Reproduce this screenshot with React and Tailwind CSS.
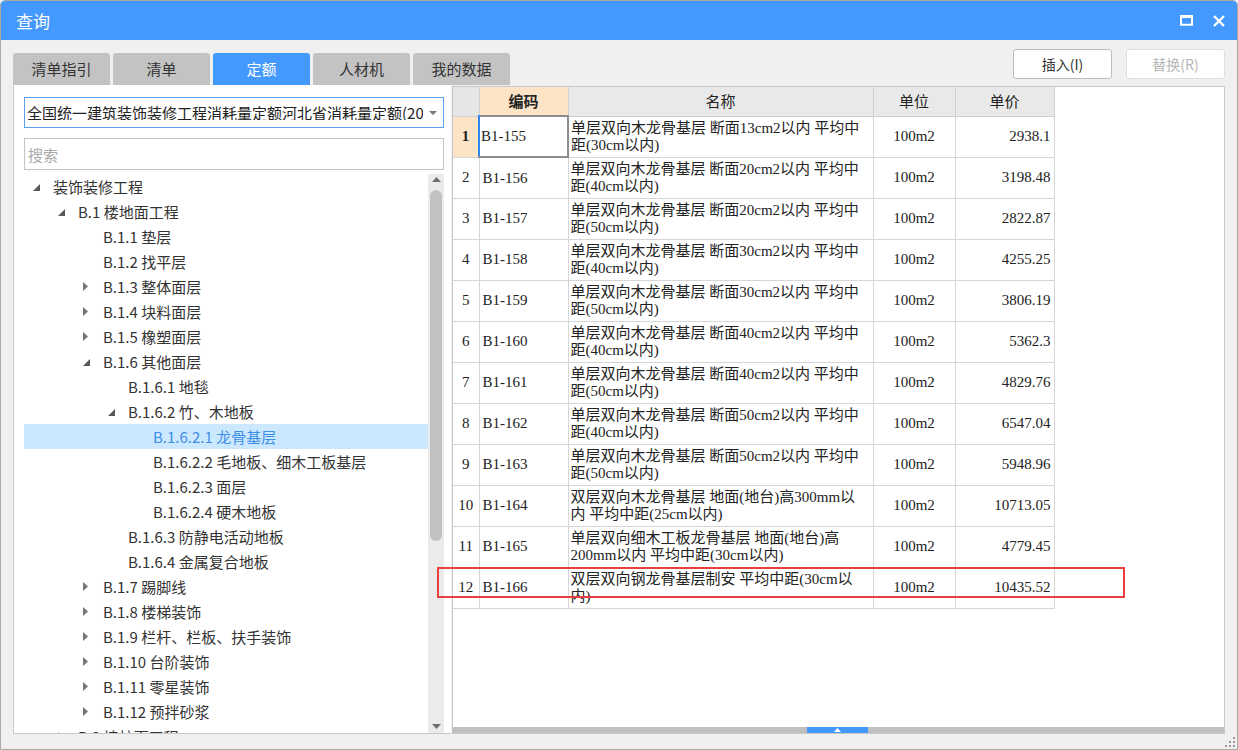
import React from "react";

const tree = [
  [0, "exp", "装饰装修工程"],
  [1, "exp", "B.1 楼地面工程"],
  [2, null, "B.1.1 垫层"],
  [2, null, "B.1.2 找平层"],
  [2, "col", "B.1.3 整体面层"],
  [2, "col", "B.1.4 块料面层"],
  [2, "col", "B.1.5 橡塑面层"],
  [2, "exp", "B.1.6 其他面层"],
  [3, null, "B.1.6.1 地毯"],
  [3, "exp", "B.1.6.2 竹、木地板"],
  [4, null, "B.1.6.2.1 龙骨基层", true],
  [4, null, "B.1.6.2.2 毛地板、细木工板基层"],
  [4, null, "B.1.6.2.3 面层"],
  [4, null, "B.1.6.2.4 硬木地板"],
  [3, null, "B.1.6.3 防静电活动地板"],
  [3, null, "B.1.6.4 金属复合地板"],
  [2, "col", "B.1.7 踢脚线"],
  [2, "col", "B.1.8 楼梯装饰"],
  [2, "col", "B.1.9 栏杆、栏板、扶手装饰"],
  [2, "col", "B.1.10 台阶装饰"],
  [2, "col", "B.1.11 零星装饰"],
  [2, "col", "B.1.12 预拌砂浆"],
  [1, "col", "B.2 墙柱面工程"],
];

const rows = [
  ["B1-155", "单层双向木龙骨基层 断面13cm2以内 平均中", "距(30cm以内)", "2938.1"],
  ["B1-156", "单层双向木龙骨基层 断面20cm2以内 平均中", "距(40cm以内)", "3198.48"],
  ["B1-157", "单层双向木龙骨基层 断面20cm2以内 平均中", "距(50cm以内)", "2822.87"],
  ["B1-158", "单层双向木龙骨基层 断面30cm2以内 平均中", "距(40cm以内)", "4255.25"],
  ["B1-159", "单层双向木龙骨基层 断面30cm2以内 平均中", "距(50cm以内)", "3806.19"],
  ["B1-160", "单层双向木龙骨基层 断面40cm2以内 平均中", "距(40cm以内)", "5362.3"],
  ["B1-161", "单层双向木龙骨基层 断面40cm2以内 平均中", "距(50cm以内)", "4829.76"],
  ["B1-162", "单层双向木龙骨基层 断面50cm2以内 平均中", "距(40cm以内)", "6547.04"],
  ["B1-163", "单层双向木龙骨基层 断面50cm2以内 平均中", "距(50cm以内)", "5948.96"],
  ["B1-164", "双层双向木龙骨基层 地面(地台)高300mm以", "内 平均中距(25cm以内)", "10713.05"],
  ["B1-165", "单层双向细木工板龙骨基层 地面(地台)高", "200mm以内 平均中距(30cm以内)", "4779.45"],
  ["B1-166", "双层双向钢龙骨基层制安 平均中距(30cm以", "内)", "10435.52"],
];

const uiFont = { fontFamily: '"Noto Sans CJK SC", "Noto Sans", sans-serif' };
const tableFont = { fontFamily: '"Liberation Serif", "Noto Sans CJK SC", serif' };

function ExpTri() {
  return (
    <svg width="7" height="7" viewBox="0 0 7 7" className="block">
      <polygon points="7,0 7,7 0,7" fill="#595959" />
    </svg>
  );
}
function ColTri() {
  return (
    <svg width="5" height="9" viewBox="0 0 5 9" className="block">
      <polygon points="0,0 5,4.5 0,9" fill="#757575" />
    </svg>
  );
}

const tabs = ["清单指引", "清单", "定额", "人材机", "我的数据"];

export default function App() {
  return (
    <div
      className="relative w-[1238px] h-[750px] overflow-hidden bg-[#f0f0f0] border border-[#a9a9a9] rounded-t-[5px] flex flex-col text-[#333]"
      style={uiFont}
    >
      {/* Title bar */}
      <div className="h-[39px] shrink-0 bg-[#4499ff] flex items-center pl-[15px] pr-[12px]">
        <span className="text-white text-[17px] leading-none">查询</span>
        <div className="ml-auto flex items-center gap-[20px]">
          <svg width="13" height="11" viewBox="0 0 13 11">
            <rect x="1" y="1.25" width="11" height="8.5" fill="none" stroke="white" strokeWidth="2" />
            <rect x="0" y="0" width="13" height="3" fill="white" />
          </svg>
          <svg width="12" height="12" viewBox="0 0 12 12">
            <path d="M1 1 L11 11 M11 1 L1 11" stroke="white" strokeWidth="2.4" />
          </svg>
        </div>
      </div>

      {/* Top row: tabs + buttons */}
      <div className="h-[45px] shrink-0 flex pl-[12px] pr-[12px]">
        <div className="flex items-end gap-[3px] self-end">
          {tabs.map((t) => (
            <div
              key={t}
              className={
                t === "定额"
                  ? "w-[97px] h-[32px] rounded-t-[3px] bg-[#4499ff] text-white text-[15px] flex items-center justify-center"
                  : "w-[97px] h-[32px] rounded-t-[3px] bg-[#c3c3c3] text-[#333] text-[15px] flex items-center justify-center"
              }
            >
              {t}
            </div>
          ))}
        </div>
        <div className="ml-auto flex gap-[14px] mt-[9px] self-start">
          <div className="w-[99px] h-[30px] rounded-[3px] bg-white border border-[#bdbdbd] text-[14px] text-[#333] flex items-center justify-center">
            插入(I)
          </div>
          <div className="w-[99px] h-[30px] rounded-[3px] bg-white border border-[#dedede] text-[14px] text-[#b5b5b5] flex items-center justify-center">
            替换(R)
          </div>
        </div>
      </div>

      {/* Main */}
      <div className="flex-1 min-h-0 flex pl-[12px] pr-[12px]">
        {/* Left panel */}
        <div className="w-[438px] shrink-0 bg-white border-l border-b border-[#c8c8c8] flex flex-col pl-[10px] pr-[7px] pt-[12px]">
          <div className="h-[31px] border border-[#5a9ff0] flex items-center pl-[2px] pr-[6px] shrink-0">
            <div className="flex-1 overflow-hidden whitespace-nowrap text-[15px] text-[#222] leading-none">
              全国统一建筑装饰装修工程消耗量定额河北省消耗量定额(2012)
            </div>
            <svg width="8" height="4" viewBox="0 0 8 4" className="ml-[6px] shrink-0">
              <polygon points="0,0 8,0 4,4" fill="#777" />
            </svg>
          </div>
          <div className="mt-[10px] h-[32px] border border-[#c4c4c4] flex items-center pl-[3px] shrink-0">
            <span className="text-[15px] text-[#a9a9a9] leading-none">搜索</span>
          </div>
          <div className="mt-[4px] flex-1 min-h-0 flex overflow-hidden">
            <div className="flex-1 min-w-0 overflow-hidden">
              {tree.map(([lvl, kind, label, sel], i) => (
                <div
                  key={i}
                  className={
                    sel
                      ? "h-[25px] flex items-center bg-[#cce8ff] text-[#3d8ee6] whitespace-nowrap"
                      : "h-[25px] flex items-center text-[#333] whitespace-nowrap"
                  }
                  style={{ paddingLeft: 7 + 25 * lvl }}
                >
                  <div className="w-[22px] shrink-0 pl-[2px] flex items-center">
                    {kind === "exp" ? (
                      <div className="mt-[1px]">
                        <ExpTri />
                      </div>
                    ) : kind === "col" ? (
                      <ColTri />
                    ) : null}
                  </div>
                  <span className="text-[15px] leading-none">{label}</span>
                </div>
              ))}
            </div>
            <div className="w-[16px] shrink-0 bg-[#ebebeb] flex flex-col items-center">
              <svg width="9" height="5" viewBox="0 0 9 5" className="mt-[3px]">
                <polygon points="0,5 9,5 4.5,0" fill="#6e6e6e" />
              </svg>
              <div className="mt-[8px] w-[12px] h-[351px] rounded-full bg-[#c2c2c2]" />
              <svg width="9" height="5" viewBox="0 0 9 5" className="mt-auto mb-[4px]">
                <polygon points="0,0 9,0 4.5,5" fill="#6e6e6e" />
              </svg>
            </div>
          </div>
        </div>

        {/* Right panel */}
        <div className="ml-[1px] mt-px flex-1 min-w-0 bg-white border border-[#c8c8c8] flex flex-col">
          <div className="flex-1 min-h-0 overflow-hidden" style={tableFont}>
            <table className="border-collapse table-fixed w-[601px] text-[#222]">
              <colgroup>
                <col className="w-[26px]" />
                <col className="w-[89px]" />
                <col className="w-[305px]" />
                <col className="w-[82px]" />
                <col className="w-[99px]" />
              </colgroup>
              <thead>
                <tr className="h-[29px]">
                  <th className="bg-[#e6e6e6] border-r border-b border-[#d0d0d0]"></th>
                  <th
                    className="bg-[#fde4c6] border-r border-b border-[#d0d0d0] text-[15px] font-bold"
                    style={uiFont}
                  >
                    编码
                  </th>
                  <th className="bg-[#e9e9e9] border-r border-b border-[#d0d0d0] text-[15px] font-normal" style={uiFont}>
                    名称
                  </th>
                  <th className="bg-[#e9e9e9] border-r border-b border-[#d0d0d0] text-[15px] font-normal" style={uiFont}>
                    单位
                  </th>
                  <th className="bg-[#e9e9e9] border-r border-b border-[#d0d0d0] text-[15px] font-normal" style={uiFont}>
                    单价
                  </th>
                </tr>
              </thead>
              <tbody>
                {rows.map(([code, l1, l2, price], i) => (
                  <tr key={code} className="h-[41px]">
                    <td
                      className={
                        i === 0
                          ? "bg-[#fde4c6] border-r border-b border-[#d6d6d6] text-center text-[15px] font-bold p-0"
                          : "bg-white border-r border-b border-[#d6d6d6] text-center text-[15px] p-0"
                      }
                    >
                      {i + 1}
                    </td>
                    <td
                      className={
                        i === 0
                          ? "border-2 border-l-[#2f86f0] border-t-[#8c8c8c] border-r-[#8c8c8c] border-b-[#8c8c8c] text-[15px] pl-[1px] p-0 align-middle"
                          : "border-r border-b border-[#d6d6d6] text-[15px] pl-[3px] p-0 align-middle"
                      }
                    >
                      {code}
                    </td>
                    <td className="border-r border-b border-[#d6d6d6] pl-[2px] p-0 align-middle">
                      <div className="h-[39px] overflow-hidden flex flex-col justify-center text-[15px] leading-[17px] whitespace-nowrap">
                        <div>{l1}</div>
                        <div>{l2}</div>
                      </div>
                    </td>
                    <td className="border-r border-b border-[#d6d6d6] text-center text-[15px] p-0">100m2</td>
                    <td className="border-r border-b border-[#d6d6d6] text-right text-[15px] pr-[3px] p-0">{price}</td>
                  </tr>
                ))}
              </tbody>
            </table>
          </div>
          <div className="h-[6px] shrink-0 bg-[#c0c0c0] flex">
            <div className="ml-[354px] w-[61px] h-[6px] bg-[#4499ff] flex items-center justify-center">
              <svg width="7" height="4" viewBox="0 0 7 4">
                <polygon points="0,4 7,4 3.5,0" fill="white" />
              </svg>
            </div>
          </div>
        </div>
      </div>

      {/* Bottom strip */}
      <div className="h-[15px] shrink-0 flex justify-end items-end pr-[1px] pb-[1px]">
        <svg width="13" height="13" viewBox="0 0 13 13">
          <rect x="10" y="2" width="2" height="2" fill="#9a9a9a" />
          <rect x="6" y="6" width="2" height="2" fill="#9a9a9a" />
          <rect x="10" y="6" width="2" height="2" fill="#9a9a9a" />
          <rect x="2" y="10" width="2" height="2" fill="#9a9a9a" />
          <rect x="6" y="10" width="2" height="2" fill="#9a9a9a" />
          <rect x="10" y="10" width="2" height="2" fill="#9a9a9a" />
        </svg>
      </div>

      {/* Red highlight annotation */}
      <div className="absolute left-[436px] top-[566px] w-[688px] h-[31px] border-2 border-[#e8403f] pointer-events-none" />
    </div>
  );
}
